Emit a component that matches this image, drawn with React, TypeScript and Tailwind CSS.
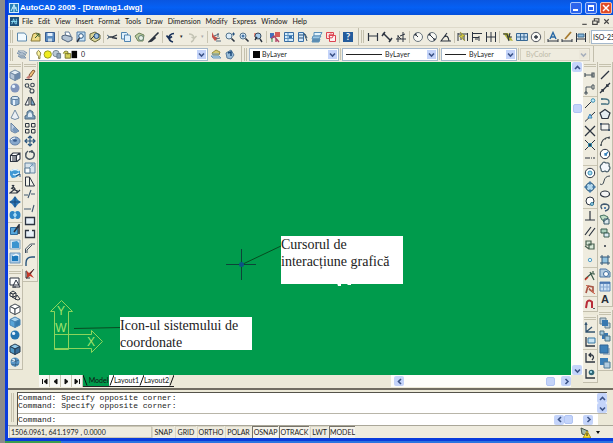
import React from "react";

const ink = "#2c3440";
const navy = "#24507c";
const pale = "#dcecf8";

const Ball = ({ fill }: { fill: string }) => (
  <>
    <circle cx="6" cy="6" r="4.5" fill={fill} />
    <circle cx="4.6" cy="4.4" r="1.6" fill="#e8f4ff" />
  </>
);

const Lens = () => (
  <>
    <circle cx="5" cy="5" r="3" fill={pale} stroke="#54748c" />
    <path d="M7.5 7.5l3 3" stroke={ink} strokeWidth="1.6" />
  </>
);

const Cube = ({ top, left, right, line }: { top: string; left: string; right: string; line: string }) => (
  <g stroke={line} strokeLinejoin="round">
    <path d="M1 3.5L6 1l5 2.5L6 6z" fill={top} />
    <path d="M1 3.5V9l5 2.5V6z" fill={left} />
    <path d="M11 3.5V9l-5 2.5V6z" fill={right} />
  </g>
);

const icons: Record<string, React.ReactNode> = {
  New: <path d="M1.5 2h7l2 2.5V10h-9z" fill="#f2faff" stroke="#5c88ac" />,
  Open: (
    <>
      <path d="M1 10L3 3l3-1 4 1v7z" fill="#f0dc88" stroke="#887838" />
      <path d="M5 7l4-4M6 3h3v3" stroke="#386038" />
    </>
  ),
  Save: (
    <>
      <path d="M1.500 1.500h9v9h-9z" fill="#5c8cc0" stroke="#385c90" />
      <path d="M3.500 2h5v3h-5z" fill="#e4f0fc" />
      <path d="M4 7.500h4v3H4z" fill="#c4d8e8" />
    </>
  ),
  Plot: (
    <>
      <path d="M4 1h4l2 4H5z" fill="#fff" stroke="#68809c" />
      <path d="M1 5l3-1 7 2v3l-4 2-6-3z" fill="#b4c4d4" stroke="#50647c" />
    </>
  ),
  Preview: (
    <>
      <path d="M2 1h8v9H2z" fill="#c8e4f8" stroke="#4c78a4" />
      <circle cx="6" cy="5" r="2.300" fill="#fff" stroke={navy} />
      <path d="M4.500 7L2 11" stroke={ink} strokeWidth="1.500" />
    </>
  ),
  Publish: (
    <>
      <path d="M1 3l5-2 5 3v4l-5 3-5-3z" fill="#d8d498" stroke="#68683c" />
      <circle cx="7.500" cy="5" r="2.500" fill="#9cc0e0" stroke={navy} />
      <path d="M2 8l3-3" stroke={ink} />
    </>
  ),
  Cut: (
    <>
      <path d="M2 6h4l5-2M6 6.500l5 1" stroke={ink} strokeWidth="1.300" />
      <path d="M1 4l3 2-3 2" stroke="#5c7488" />
    </>
  ),
  Copy: (
    <g fill="#e0f0fc" stroke="#5084b0">
      <path d="M1.500 1.500h5l1 1V8h-6z" />
      <path d="M4.500 4h5l1 1v5.500h-6z" />
    </g>
  ),
  Paste: (
    <>
      <path d="M1 5l4-3 5 2-1 6H4z" fill="#bccca4" stroke="#70845c" />
      <circle cx="7" cy="7" r="2.500" fill="#e8f0e8" stroke="#608070" />
    </>
  ),
  "Match Properties": <path d="M10.500 1.500L6 6M6 6l-4.500 4.500 2-.4L7 7z" stroke={ink} strokeWidth="1.600" fill="#5c4430" />,
  Undo: <path d="M8 11q-4-1-4-4.500Q4.500 3 9 2.500M1.500 4.500L4 7.500l3-2" stroke="#183058" strokeWidth="1.700" />,
  Redo: <path d="M5 11q3-1 3-4.500Q7 3 3 3M10.500 5L8 7.500 5.500 6" stroke="#c4c4b4" strokeWidth="1.400" />,
  Pan: (
    <>
      <path d="M2 1v5l3 4 3-3-4-2z" fill="#c45048" />
      <path d="M4 5l5-2M6 8l4-1M6 10h5M8 2v4" stroke="#54687c" />
    </>
  ),
  "Zoom Realtime": (
    <>
      <Lens />
      <path d="M8 3h3M9.500 1.500v3" stroke={navy} />
    </>
  ),
  "Zoom Window": (
    <>
      <Lens />
      <circle cx="5" cy="5" r="1.500" fill="#4878a8" />
    </>
  ),
  "Zoom Previous": (
    <>
      <path d="M2 2h6v4H2z" fill="#f08c78" />
      <circle cx="6" cy="5" r="3" fill="#a8ccec" stroke="#384c60" />
      <path d="M8 8l2 3M3 9l2-3" stroke={ink} strokeWidth="1.400" />
    </>
  ),
  Properties: (
    <>
      <path d="M1 2h4v5H1z" fill="#4470bc" />
      <path d="M6 1h5v5H6z" fill="#d45c58" />
      <path d="M2 8l3-3 5 6M7 7v4" stroke="#b04468" strokeWidth="1.400" />
      <path d="M3 7v4" stroke="#389058" />
    </>
  ),
  DesignCenter: (
    <>
      <path d="M1.500 1.500h9v9h-9z" fill="#d4ecfc" stroke="#386ca0" />
      <path d="M5 2v8M2 4.500h8M2 7.500h8" stroke="#5890c0" />
      <path d="M6 5h3v2H6z" fill="#3870a8" />
    </>
  ),
  "Tool Palettes": (
    <>
      <path d="M1.500 1.500h5v9h-5z" fill="#d0e8fc" stroke="#3870a8" />
      <path d="M7 2l3 8M8 3l2 4M2 4h4M2 7h4" stroke="#30506c" />
    </>
  ),
  "Sheet Set Manager": (
    <g stroke="#5c90b8">
      <path d="M3 1.500h8L9 5H3z" fill="#e4f4fc" />
      <path d="M2 5h8l-2 3H1z" fill="#9cc8e4" />
      <path d="M2 8h7l-1 3H1z" fill="#5c8cb0" />
    </g>
  ),
  "Markup Set Manager": (
    <g stroke="#dc4450">
      <path d="M1.500 1.500h7v6h-7z" fill="#fce0e0" />
      <path d="M4.500 4.500h6v6h-6z" fill="#fcf0f0" />
      <circle cx="6" cy="5" r="2" fill="none" />
    </g>
  ),
  Linear: <path d="M1.500 2v8M10.500 2v8M2 5h8" stroke={ink} strokeWidth="1.200" />,
  Aligned: <path d="M2 2l8 8M1 5l3-4M8 11l3-4" stroke={ink} strokeWidth="1.500" />,
  Ordinate: <path d="M1 8h10M3 4v7M8 1v10M5 5l5-2M3 5l3 3" stroke={ink} />,
  Radius: (
    <>
      <circle cx="6" cy="6" r="4.500" stroke="#68747c" fill="#f8f8f4" />
      <path d="M6 6L3 3M3 5V3h2" stroke={ink} />
    </>
  ),
  Diameter: (
    <>
      <circle cx="6" cy="6" r="4.500" stroke="#68747c" fill="#f8f8f4" />
      <path d="M3 3l6 6M3 5V3h2M9 7v2H7" stroke={ink} />
    </>
  ),
  Angular: <path d="M7 2L1 10h10M4 6q4-3 5 4" stroke={ink} strokeWidth="1.100" />,
  "Quick Dimension": (
    <>
      <path d="M1 2v8M10.500 2v8M1 3h9M4 4v5M7 4v5" stroke={ink} />
      <path d="M3 1l5 4-3 1 3 4-6-5 3-1z" fill="#d4cc48" stroke="#807c20" strokeWidth=".5" />
    </>
  ),
  Baseline: <path d="M1.500 1v10M2 2.500h9M2 6.500h6M8 5v5M4 8h3" stroke={ink} />,
  Continue: <path d="M1.500 1v10M6 1v10M10.500 1v10M2 6h8" stroke={ink} />,
  Leader: (
    <>
      <path d="M1 2l5 0 5 8-5-1z" fill="#b4b438" />
      <path d="M1 3h4l2 7M8 2l-1 4h3" stroke={ink} strokeWidth="1.100" />
    </>
  ),
  Tolerance: (
    <>
      <path d="M.500 2.500h11v7H.500z" fill="#c4dcf0" stroke="#386894" />
      <path d="M4.500 3v6M8 3v6M1 6h10" stroke="#386894" />
    </>
  ),
  "Center Mark": (
    <>
      <circle cx="6" cy="6" r="4.700" stroke="#50545c" fill="#f8f8f4" />
      <path d="M6 4v4M4 6h4" stroke={ink} strokeWidth="1.300" />
    </>
  ),
  "Dimension Text Edit": (
    <>
      <path d="M3 8l3-6.500L9 8M4 6h4" stroke="#2868a4" strokeWidth="1.400" />
      <path d="M1 8v3M11 8v3M1 10h10" stroke={ink} />
    </>
  ),
  "Dimension Edit": (
    <>
      <path d="M1 8v3M11 8v3M1 10h10" stroke={ink} />
      <path d="M10 1L4 8" stroke="#a87c30" strokeWidth="1.800" />
    </>
  ),
  "Dimension Update": (
    <>
      <path d="M1.500 2v9M10.500 2v9M2 8h8" stroke={ink} />
      <path d="M3 3h6v3H3z" fill="#88b8dc" stroke="#386890" />
    </>
  ),
  "Layer Properties": (
    <g stroke="#7c94ac">
      <path d="M2 3h6l3 2H5z" fill="#fff" />
      <path d="M1 5h6l3 2H4z" fill="#dce4ec" />
      <path d="M2 8h6l2 2H5z" fill="#b0c0d0" />
    </g>
  ),
  "Make Layer Current": (
    <>
      <path d="M2 5l4-3 4 2-1 3H3z" fill="#d4c870" stroke="#989040" />
      <path d="M1 8h8l2 2H3zM2 6h7" stroke="#6898bc" fill="#b8d8ec" />
    </>
  ),
  "Layer Previous": (
    <>
      <path d="M2 5l5-3 3 5-3 4-4-1z" fill="#98bcd8" stroke="#587c9c" />
      <path d="M4 5l3-1v4" stroke="#1c4878" strokeWidth="1.500" />
    </>
  ),
  Box: <Cube top="#e4ecf4" left="#b4c4d8" right="#6c88ac" line="#7088a4" />,
  Sphere: <Ball fill="#8094bc" />,
  Cylinder: (
    <>
      <path d="M2 3v6q4 3 8 0V3z" fill="#88a8c8" stroke="#587898" />
      <path d="M4 4h2v6H4z" fill="#e4f0fc" />
      <ellipse cx="6" cy="3" rx="4" ry="1.600" fill="#dcecf8" stroke="#587898" />
    </>
  ),
  Cone: <path d="M6 1l4 8q-4 3-8 0z" fill="#ecf0f4" stroke="#748ca4" />,
  Wedge: (
    <>
      <path d="M2 1l8 8-4 2-4-2z" fill="#c0d0e4" stroke="#6480a0" />
      <path d="M5 5l5 4-4 2-3-3z" fill="#7898bc" />
    </>
  ),
  Torus: (
    <>
      <ellipse cx="6" cy="6" rx="5" ry="4" fill="#88a8cc" stroke="#6080a8" />
      <ellipse cx="6" cy="5.500" rx="2" ry="1.200" fill="#385c8c" />
      <path d="M2 5q1-2 4-2" stroke="#fff" />
    </>
  ),
  Extrude: <path d="M1.500 4.500h6v6h-6zM1.500 4.500L4 2h7v6l-3 2.500M7.500 4.500L11 2M4 5v5M6 5v5" stroke={ink} strokeWidth="1.100" fill="#fff" />,
  Revolve: (
    <>
      <path d="M1 4q5-4 10 0v3q-3 4-8 4L1 8z" fill="#4098d4" />
      <path d="M2 4q4-3 8 0M4 7q2 2 6-1" stroke="#e0f4ff" strokeWidth="1.300" />
      <path d="M7 9l4-2v3" stroke={navy} />
    </>
  ),
  Slice: <path d="M3 2l3 4-5 4h7l3-3M2 5l6 3M5 2l-2 4M8 7v3" stroke={ink} strokeWidth="1.200" />,
  Section: (
    <>
      <path d="M6 0l3 4 3 2-3 2-3 4-3-4-3-2 3-2z" fill="#2c78b8" />
      <path d="M6 1v10M1 6h10" stroke="#184878" />
    </>
  ),
  Interfere: (
    <>
      <ellipse cx="3.500" cy="6" rx="3" ry="4" fill="#2c84c4" />
      <ellipse cx="8.500" cy="6" rx="3" ry="4" fill="#2c84c4" />
      <path d="M6 3l2 3-2 3-2-3z" fill="#a8dcf8" />
    </>
  ),
  "Setup Drawing": (
    <>
      <path d="M1.500 3.500h7v7h-7z" fill="#58a8dc" stroke="#306c9c" />
      <path d="M5 8l5-7v9" stroke={ink} strokeWidth="1.600" />
    </>
  ),
  "Setup View": (
    <>
      <path d="M1 2h10v9H1z" fill="#d8e8f4" stroke="#88a4bc" />
      <path d="M3 4l5-1 2 2v5H3z" fill="#3c94d0" />
    </>
  ),
  "Setup Profile": (
    <>
      <path d="M1 1h10v10H1z" fill="#a8cce8" stroke="#7098bc" />
      <path d="M3 4h6v5H3z" fill="#1c78bc" />
      <path d="M4 4l3-2 3 2" stroke="#fff" />
    </>
  ),
  "2D Wireframe": <path d="M1 2h9v7H1zM4 10l3-6 4 7H4M3 11h4" stroke={ink} fill="#fff" />,
  "3D Wireframe": <path d="M1 4l3-2 3 2v3L4 8 1 7zM1 4l3 1 3-1M4 5v3M6 10l2-4 3 4-2 1zM3 8l4 2" stroke={ink} fill="none" />,
  Hidden: <Cube top="#fff" left="#fff" right="#fff" line="#444c54" />,
  "Flat Shaded": <Cube top="#a8d4f0" left="#58a4d8" right="#387cb0" line="#4884b4" />,
  "Gouraud Shaded": <Ball fill="#2474b0" />,
  "Flat Shaded Edges": <Cube top="#90c8e8" left="#5098c4" right="#386c98" line="#243c54" />,
  "Gouraud Shaded Edges": (
    <>
      <Ball fill="#5c98c8" />
      <path d="M2 4q4 3 8 0M2 8q4 2 8 0M6 2q2 4 0 9" stroke="#305878" strokeWidth=".7" />
    </>
  ),
  Erase: (
    <>
      <path d="M5 6l4-5 2 1-4 6z" fill="#f0c078" stroke="#805838" />
      <path d="M5 6l2 2-2 2-3-1z" fill="#c88078" />
      <path d="M1 10.500h7" stroke={ink} />
    </>
  ),
  "Copy Object": (
    <g stroke="#3c4854" strokeWidth="1.100">
      <circle cx="3" cy="3.500" r="1.800" />
      <circle cx="8.500" cy="3" r="1.800" />
      <circle cx="8" cy="9" r="2" />
      <path d="M4.500 5.500L7 7" />
    </g>
  ),
  Mirror: (
    <>
      <path d="M5 2v8H1z" stroke={ink} fill="#f8f8f8" />
      <path d="M7 2v8h4z" stroke={ink} fill="#78a8cc" />
    </>
  ),
  Offset: (
    <>
      <path d="M1 10V7l2-1V3l3-2 3 2v3l2 1v3z" fill="#7c9cb8" stroke="#506c84" />
      <path d="M4 8V5l2-2 2 2v3z" fill="#e0ecf4" />
    </>
  ),
  Array: <path d="M1.500 1.500h3.500v3.500H1.500zM7.500 1.500H11v3.500H7.500zM1.500 7.500h3.500V11H1.500zM7.500 7.500H11V11H7.500z" stroke={ink} />,
  Move: <path d="M6 1v10M1 6h10M4 3l2-2 2 2M4 9l2 2 2-2M3 4L1 6l2 2M9 4l2 2-2 2" stroke="#28547c" strokeWidth="1.200" />,
  Rotate: <path d="M4 2Q1 4 2 8q3 4 7 1 3-4-1-7L5 3M8 1v3" stroke="#485460" strokeWidth="1.400" />,
  Scale: (
    <>
      <path d="M1 1h10v10H1z" fill="#d8e4ec" stroke="#6484a0" />
      <path d="M1 6h5v5H1z" fill="#f8fcff" stroke="#587890" />
      <path d="M5 6l4-4M6.500 2H9v2.500" stroke="#7098b8" />
    </>
  ),
  Stretch: <path d="M1.500 11V2h4l5 9zM5.500 2v9" fill="#f4f4ec" stroke={ink} />,
  Trim: <path d="M0 7h4M7 6h4M4 10l3-8" stroke="#405870" strokeWidth="1.100" />,
  Extend: <path d="M0 7h7M8 10l2-7" stroke="#405870" strokeWidth="1.100" />,
  "Break at Point": <path d="M1.500 2.500h9v7h-9z" fill="#e8f0f8" stroke={ink} strokeWidth="1.300" />,
  Break: <path d="M5 2.500H1.500v7h9v-7H8" fill="#e8f0f8" stroke={ink} strokeWidth="1.300" />,
  Chamfer: <path d="M1.500 11V7l5-5H11M3 11V8l5-5" stroke="#405060" />,
  Fillet: <path d="M2 11V8q0-6 6-6h3" stroke="#28547c" strokeWidth="1.400" />,
  Explode: (
    <>
      <path d="M2 2l3 3 5-4-3 5 3 4-4-2-4 3 1-4z" fill="#c43828" />
      <path d="M6 6l4-5M2 3v7h4" stroke={ink} />
    </>
  ),
  "Temporary Tracking": <path d="M1 4v4M1 6h8M8 4h2v4H8z" stroke="#48545c" strokeWidth="1.200" />,
  "Snap From": <path d="M2 10V4h6M8 2h2v4H8zM1 9h2v2H1z" stroke="#48545c" />,
  Endpoint: (
    <>
      <path d="M1 10l8-8" stroke={ink} />
      <circle cx="9" cy="2.500" r="1.800" stroke="#3c94b8" fill="#c8e8f4" />
    </>
  ),
  Midpoint: (
    <>
      <path d="M1 10.500L11 1" stroke={ink} />
      <path d="M6 3l2 4H4z" stroke="#3884bc" fill="#a8d0ec" />
    </>
  ),
  Intersection: <path d="M1 1l10 10M11 1L1 11" stroke={ink} strokeWidth="1.300" />,
  "Apparent Intersection": (
    <>
      <path d="M1 1l10 10M11 1L1 11" stroke={ink} />
      <path d="M4.500 4.500h3v3h-3z" stroke="#3890b4" />
    </>
  ),
  Extension: <path d="M1 6h5M7 6h1M9 6h2" stroke={ink} />,
  "Snap Center": (
    <>
      <circle cx="6" cy="6" r="4.700" stroke={ink} fill="#fff" />
      <circle cx="6" cy="6" r="2" fill="#a8dcf0" stroke="#3c90b8" />
    </>
  ),
  Quadrant: (
    <>
      <circle cx="6" cy="6" r="4" stroke="#38607c" fill="#b4d8ec" />
      <path d="M6 0l2 2-2 2-2-2zM6 8l2 2-2 2-2-2zM0 6l2-2 2 2-2 2zM8 6l2-2 2 2-2 2z" fill="#487ca8" />
    </>
  ),
  Tangent: (
    <>
      <circle cx="6" cy="6" r="4" stroke={ink} fill="#fff" />
      <circle cx="8" cy="9" r="1.500" fill="#a4d4e8" stroke="#307c9c" />
    </>
  ),
  Perpendicular: <path d="M6 1v9M1 10h10" stroke={ink} strokeWidth="1.200" />,
  Parallel: <path d="M1 10l6-8M5 11l6-8" stroke={ink} strokeWidth="1.200" />,
  "Snap Insert": <path d="M2 2h5v4H2zM5 5h5v5H5zM1 7l4 3" stroke="#486050" strokeWidth="1.200" fill="#d8e8d8" />,
  Node: <circle cx="6" cy="6" r="1.700" stroke="#54a0c8" fill="#e4f4fc" />,
  Nearest: (
    <>
      <path d="M1 10l7-6M6 3l4 8M9 2v3h2" stroke="#385848" strokeWidth="1.200" />
      <path d="M1 11l3-3" stroke="#c43828" strokeWidth="1.500" />
    </>
  ),
  "Snap None": (
    <>
      <path d="M2 10l2-7 5 1v5L5 6" stroke="#a85848" strokeWidth="1.700" />
      <path d="M2 2l9 9" stroke="#d46850" />
    </>
  ),
  "Osnap Settings": (
    <>
      <path d="M2 10l1-6q2-3 5 0v6" stroke="#b82c38" strokeWidth="2" />
      <path d="M10 10v1" stroke={ink} strokeWidth="1.500" />
    </>
  ),
  UCS: <path d="M2 1v9h9M2 10l6-5M1 3l1-2 1 2" stroke="#345470" strokeWidth="1.300" />,
  "UCS Dialog": (
    <>
      <path d="M2 1v9h9" stroke={ink} strokeWidth="1.300" />
      <path d="M4 2h7v5H4z" stroke="#3878a4" fill="#c8e4f4" />
    </>
  ),
  "UCS Previous": <path d="M2 1v9h9M8 8q3-3 0-5H5M7 1L5 3l2 2" stroke={ink} strokeWidth="1.300" />,
  "UCS World": (
    <>
      <path d="M2 1v9h9" stroke={ink} strokeWidth="1.300" />
      <circle cx="7.500" cy="4.500" r="2.800" fill="#306878" />
      <path d="M6 3h2v2H6z" fill="#98d0e0" />
    </>
  ),
  Line: <path d="M2 10l8-8" stroke={ink} strokeWidth="1.200" />,
  "Construction Line": <path d="M1 11L11 1M3 7v2h2M7 3h2v2" stroke={ink} strokeWidth="1.300" />,
  Polyline: <path d="M2 4h4q4 0 4 3T7 9H2M3 3v2" stroke="#447080" strokeWidth="1.300" />,
  Polygon: <path d="M6 1.500L11 5l-2 5.500H3L1 5z" stroke={ink} fill="#e4ecf0" strokeWidth="1.200" />,
  Rectangle: (
    <>
      <path d="M2 3h8v6H2z" stroke={ink} fill="#f4f4f0" />
      <path d="M1 2h2v2H1zM9 8h2v2H9z" fill="#44586c" />
    </>
  ),
  Arc: <path d="M2 11q0-8 9-9M1 10h2M5 4h2M10 2v2" stroke="#40484c" strokeWidth="1.200" />,
  Circle: (
    <>
      <circle cx="6" cy="6" r="4.700" stroke={ink} fill="#fff" />
      <path d="M6 7l3-3M6 5v2h2" stroke="#3480bc" strokeWidth="1.300" />
    </>
  ),
  "Revision Cloud": <path d="M3 3q1-3 4-1 4-1 3 3 2 2 0 4-1 3-4 1-4 2-4-2-2-3 1-5z" stroke="#4c606c" fill="#f4f8fc" strokeWidth="1.200" />,
  Spline: <path d="M1 10q3 2 4-3t6-5" stroke="#404c54" />,
  Ellipse: <ellipse cx="6" cy="6" rx="4.500" ry="3" stroke={ink} strokeWidth="1.200" fill="#f4f4f4" />,
  "Ellipse Arc": (
    <>
      <path d="M3 8Q0 4 5 3q5 0 5 3t-4 4" stroke="#405870" strokeWidth="1.300" />
      <path d="M5 6h2v2H5z" fill="#5484b4" />
    </>
  ),
  "Insert Block": (
    <>
      <path d="M1 2l4-1 4 2-1 4-5-1z" fill="#c0dcc4" stroke="#447060" />
      <path d="M5 5h5v5H5zM4 8l5-4" stroke="#385868" fill="#dce8ec" />
    </>
  ),
  "Make Block": (
    <>
      <path d="M2 2h6v4H2z" fill="#acd0bc" stroke="#385c50" />
      <path d="M5 6h5v4H5z" fill="#dcecf4" stroke="#385c50" />
    </>
  ),
  Point: <circle cx="6" cy="6" r="1" fill={ink} />,
  Hatch: (
    <>
      <path d="M3 3h6v6H3z" fill="#94c4e0" />
      <path d="M3 1v10M9 1v10M1 3h10M1 9h10" stroke="#345878" />
    </>
  ),
  Region: (
    <>
      <path d="M1 2h6l4 3v5H1z" fill="#b4cce0" stroke="#5078a4" />
      <circle cx="7" cy="7" r="2.500" fill="#fff" stroke="#3c6c9c" />
    </>
  ),
  Table: (
    <>
      <path d="M1 2h10v9H1z" fill="#cce0f4" stroke="#5c88bc" />
      <path d="M1 3h10" stroke="#3464a4" strokeWidth="1.500" />
      <path d="M4.500 4v7M8 4v7M1 7h10" stroke="#84a8d0" />
    </>
  ),
  "Bring to Front": (
    <>
      <path d="M1 1h6v6H1zM6 6h5v5H6z" fill="#b8ccd8" stroke="#68808c" />
      <path d="M3 3h6v6H3z" fill="#3878b0" />
    </>
  ),
  "Send to Back": (
    <>
      <path d="M3 3h6v6H3z" fill="#3878b0" />
      <path d="M1 1h4v4H1zM6 6h5v5H6z" fill="#a4c8dc" stroke="#507488" />
    </>
  ),
  "Bring Above": (
    <>
      <path d="M4 4h7v7H4z" fill="#a8b8c4" />
      <path d="M1 1h8v8H1z" fill="#3c80b8" stroke="#306494" />
    </>
  ),
  "Send Under": (
    <>
      <path d="M1 1h8v7H1z" fill="#3c80b8" />
      <path d="M5 5h6v6H5z" fill="#b0cce0" stroke="#4c7898" />
    </>
  ),
};

const Icon = ({ name }: { name: string }) => (
  <svg viewBox="0 0 12 12" className="size-3" fill="none" aria-hidden="true">
    {icons[name]}
  </svg>
);

const Tool = ({ name }: { name: string }) => {
  let face = <Icon name={name} />;
  if (name === "Multiline Text") {
    face = <span className="font-['Liberation_Sans'] text-[11px] leading-3 font-bold text-[#283038]">A</span>;
  }
  if (name === "Help") {
    face = <span className="size-[10px] bg-[#245c9c] text-center text-[9px] leading-[10px] font-bold text-white">?</span>;
  }
  return (
    <button type="button" aria-label={name} title={name} className="flex h-[13px] w-[14px] shrink-0 items-center justify-center">
      {face}
    </button>
  );
};

const Bar = () => <span className="mx-px h-3 w-px shrink-0 bg-[#c9c5b2]" />;

const Grip = () => (
  <span className="mx-[2px] flex h-[13px] w-[3px] shrink-0 justify-between border-x border-[#c5c1ad]" />
);

const ToolRow = ({ groups }: { groups: string[][] }) => (
  <div className="flex items-center">
    {groups.map((group, i) => (
      <React.Fragment key={group[0]}>
        {i > 0 && <Bar />}
        {group.map((name) => (
          <Tool key={name} name={name} />
        ))}
      </React.Fragment>
    ))}
  </div>
);

interface PaletteProps {
  groups: { height: string; names: string[] }[];
}

const Palette = ({ groups }: PaletteProps) => (
  <div className="flex flex-col items-center border-r border-b border-[#c2beac] bg-[#efecdf]">
    <span className="mt-[2px] mb-px h-[3px] w-3 shrink-0 border-y border-[#c5c1ad]" />
    {groups.map((group, i) => (
      <div key={group.names[0]} className={`w-full ${i > 0 ? "border-t border-[#c9c5b2]" : ""}`}>
        <div className={`grid auto-rows-fr place-items-center ${group.height}`}>
          {group.names.map((name) => (
            <Tool key={name} name={name} />
          ))}
        </div>
      </div>
    ))}
  </div>
);

const Dock = ({ children }: { children: React.ReactNode }) => <div className="flex flex-col gap-[3px]">{children}</div>;

const arrows = {
  up: "M2 6l2.500-2.500L7 6",
  down: "M2 3.500L4.500 6 7 3.500",
  left: "M6 2L3.500 4.500 6 7",
  right: "M3.500 2L6 4.500 3.500 7",
};

const Chevron = ({ dir }: { dir: keyof typeof arrows }) => (
  <svg viewBox="0 0 9 9" className="size-[9px]" fill="none" stroke="#3c5488" strokeWidth="1.600" aria-hidden="true">
    <path d={arrows[dir]} />
  </svg>
);

const ScrollButton = ({ dir }: { dir: keyof typeof arrows }) => (
  <button
    type="button"
    aria-label={`Scroll ${dir}`}
    className="flex size-[10px] shrink-0 items-center justify-center rounded-[2px] bg-[#c4d4fa]"
  >
    <Chevron dir={dir} />
  </button>
);

const Thumb = () => <span className="size-[9px] shrink-0 rounded-[2px] border border-[#b0c4f4] bg-[#c4d4fa]" />;

interface ComboProps {
  label: string;
  value: string;
  width: string;
  disabled?: boolean;
  children?: React.ReactNode;
}

const Combo = ({ label, value, width, disabled = false, children }: ComboProps) => (
  <div
    className={`relative flex h-[13px] shrink-0 items-center border pl-[3px] ${width} ${
      disabled ? "border-[#d4d0c0] bg-[#efecdf] text-[#bdb9a8]" : "border-[#a4b8cc] bg-white text-[#222]"
    }`}
  >
    {children}
    <select aria-label={label} disabled={disabled} className="h-full min-w-0 flex-1 appearance-none pl-[2px] text-[7px] leading-[11px]">
      <option>{value}</option>
    </select>
    <span
      className={`pointer-events-none absolute top-px right-px flex h-[9px] w-[9px] items-center justify-center ${
        disabled ? "bg-[#e6e2d4] opacity-40" : "bg-[#c4d4fa]"
      }`}
    >
      <Chevron dir="down" />
    </span>
  </div>
);

const LayerState = () => (
  <svg viewBox="0 0 46 12" className="h-[11px] w-[46px] shrink-0" fill="none" aria-hidden="true">
    <path d="M4 8Q0 4 4 1.500 8 4 5.500 8v2.500H4z" fill="#fcf4a0" stroke="#807840" />
    <circle cx="14" cy="6" r="4" fill="#f0ec20" stroke="#949820" />
    <circle cx="23" cy="5" r="3.500" fill="#b8c8d4" stroke="#74848c" />
    <path d="M24 5h4v5h-4z" fill="#8ca4b8" stroke="#687c8c" />
    <path d="M31 5q1-4 5-2v3M33 5h6v5h-6z" fill="#d4d058" stroke="#74742c" />
    <path d="M40 2h6v8h-6z" fill="#080808" />
  </svg>
);

const menus = ["File", "Edit", "View", "Insert", "Format", "Tools", "Draw", "Dimension", "Modify", "Express", "Window", "Help"];

const TitleBar = () => (
  <header className="flex h-[15px] items-center bg-gradient-to-b from-[#0a56e0] via-[#0560f4] to-[#0450dc] pr-px pl-px text-white">
    <svg viewBox="0 0 10 10" className="size-[10px]" aria-hidden="true">
      <path d="M0 0h10v10H0z" fill="#d8ecfc" />
      <path d="M1 1h8v8H1z" fill="#2880b8" />
      <path d="M2 8l3-6 3 6M3 5h5M5 1v8" stroke="#c4ecfc" fill="none" />
    </svg>
    <h1 className="ml-px font-['Liberation_Sans'] text-[8px] leading-[15px] font-bold whitespace-nowrap">
      AutoCAD 2005 - [Drawing1.dwg]
    </h1>
    <div className="ml-auto flex gap-[3px]">
      <button type="button" aria-label="Minimize" className="flex size-3 items-end rounded-[2px] border border-[#a8c4fc] bg-[#2c64ec] p-[2px]">
        <span className="h-[2px] w-[5px] bg-white" />
      </button>
      <button type="button" aria-label="Maximize" className="size-3 rounded-[2px] border border-[#a8c4fc] bg-[#2c64ec] p-[2px]">
        <span className="block h-[6px] border border-t-2 border-white" />
      </button>
      <button type="button" aria-label="Close" className="flex size-3 items-center justify-center rounded-[2px] border border-[#f4c0b0] bg-[#e04c28]">
        <svg viewBox="0 0 8 8" className="size-2" stroke="#fff" strokeWidth="1.500" aria-hidden="true">
          <path d="M1 1l6 6M7 1L1 7" />
        </svg>
      </button>
    </div>
  </header>
);

const MenuBar = () => (
  <nav className="flex h-[13px] items-center border-b border-[#dedaca] pl-[2px]">
    <svg viewBox="0 0 10 10" className="mr-[3px] size-[9px]" fill="none" aria-hidden="true">
      <path d="M0 0h10v10H0z" fill="#1c507c" />
      <path d="M2 8l2-6 2 6M1 5h7M7 2v6" stroke="#8cdcf4" />
    </svg>
    {menus.map((menu) => (
      <button key={menu} type="button" className="mr-[5px] text-[7px] leading-3 text-[#141414]">
        {menu}
      </button>
    ))}
    <div className="ml-auto flex gap-[2px] pr-[2px]">
      {[
        ["Minimize drawing", "M2 6.500h4"],
        ["Restore drawing", "M3 3V1.500h4v3H5.500M1.500 3.500h4v3h-4z"],
        ["Close drawing", "M2 2l4 4M6 2L2 6"],
      ].map(([label, d]) => (
        <button key={label} type="button" aria-label={label}>
          <svg viewBox="0 0 8 8" className="size-[9px]" fill="none" stroke="#444" aria-hidden="true">
            <path d={d} />
          </svg>
        </button>
      ))}
    </div>
  </nav>
);

const StandardBar = () => (
  <div className="flex h-[18px] items-center overflow-hidden border-b border-[#cfcbba]">
    <Grip />
    <ToolRow
      groups={[
        ["New", "Open", "Save"],
        ["Plot", "Preview", "Publish"],
        ["Cut", "Copy", "Paste", "Match Properties"],
        ["Undo"],
      ]}
    />
    <span className="w-[7px] shrink-0 text-center text-[5px] text-[#222]">▾</span>
    <Tool name="Redo" />
    <span className="w-[7px] shrink-0 text-center text-[5px] text-[#aaa]">▾</span>
    <Bar />
    <ToolRow
      groups={[
        ["Pan", "Zoom Realtime", "Zoom Window", "Zoom Previous"],
        ["Properties", "DesignCenter", "Tool Palettes", "Sheet Set Manager", "Markup Set Manager"],
        ["Help"],
      ]}
    />
    <span className="ml-[3px] h-full w-px shrink-0 bg-[#c2beac]" />
    <Grip />
    <ToolRow
      groups={[
        ["Linear", "Aligned", "Ordinate"],
        ["Radius", "Diameter", "Angular"],
        ["Quick Dimension", "Baseline", "Continue"],
        ["Leader", "Tolerance", "Center Mark"],
        ["Dimension Text Edit", "Dimension Edit", "Dimension Update"],
      ]}
    />
    <Bar />
    <select
      aria-label="Dimension style"
      className="h-[14px] min-w-0 flex-1 appearance-none border border-r-0 border-[#a4b8cc] bg-white pl-px text-[7px] leading-3 text-[#222]"
    >
      <option>ISO-25</option>
    </select>
  </div>
);

const PropertiesBar = () => (
  <div className="flex h-4 items-center overflow-hidden">
    <Grip />
    <Tool name="Layer Properties" />
    <Combo label="Layer" value="0" width="w-[179px]">
      <LayerState />
    </Combo>
    <span className="w-px shrink-0" />
    <Tool name="Make Layer Current" />
    <Tool name="Layer Previous" />
    <span className="ml-1 h-full w-px shrink-0 bg-[#c2beac]" />
    <Grip />
    <Combo label="Color" value="ByLayer" width="w-[90px]">
      <span className="size-[7px] shrink-0 bg-[#080808]" />
    </Combo>
    <Bar />
    <Combo label="Linetype" value="ByLayer" width="w-[96px]">
      <span className="mr-px h-px w-9 shrink-0 bg-[#222]" />
    </Combo>
    <Bar />
    <Combo label="Lineweight" value="ByLayer" width="w-[76px]">
      <span className="mr-px h-px w-[21px] shrink-0 bg-[#222]" />
    </Combo>
    <Bar />
    <Combo label="Plot style" value="ByColor" width="w-[70px]" disabled />
    <span className="ml-[3px] h-full w-px shrink-0 bg-[#c2beac]" />
  </div>
);

const Canvas = () => (
  <section aria-label="Drawing area" className="relative min-h-0 flex-1 overflow-hidden bg-[#009b4c]">
    <svg viewBox="0 0 176 56" className="absolute top-[173px] left-[187px] h-[56px] w-[176px]" fill="none" aria-hidden="true">
      <path d="M17 29l38-18" stroke="#074c20" />
      <path d="M0 29.500h30M15.500 14v31" stroke="#0c4438" />
      <circle cx="15.500" cy="29.500" r="2.500" fill="#0c5484" />
      <path d="M111 48h4v3h-3zM120 48h5v2h-3z" fill="#fff" />
    </svg>
    <p className="absolute top-[174px] left-[242px] h-12 w-[122px] bg-white font-['Liberation_Serif',serif] text-[14px] leading-[17px] whitespace-nowrap text-[#222]">
      Cursorul de
      <br />
      interacțiune grafică
    </p>
    <svg
      viewBox="0 0 72 56"
      className="absolute top-[237px] left-[10px] h-14 w-[72px] font-['Liberation_Sans']"
      fill="none"
      stroke="#8cd45c"
      aria-hidden="true"
    >
      <path d="M5.500 50.500v-38H1.500L12.500 1.500l11 11h-4v38zM5.500 35.500h37v-4l11 11-11 11v-4h-37" />
      <path d="M25 29.500l47-1" stroke="#0a4a22" />
      <g stroke="none" fill="#a4e46c" fontSize="12" textAnchor="middle">
        <text x="12" y="16">Y</text>
        <text x="12" y="33">W</text>
        <text x="42" y="47">X</text>
      </g>
    </svg>
    <p className="absolute top-[255px] left-[81px] h-[33px] w-[132px] bg-white font-['Liberation_Serif',serif] text-[14px] leading-[17px] whitespace-nowrap text-[#222]">
      Icon-ul sistemului de
      <br />
      coordonate
    </p>
  </section>
);

const Slash = ({ flip = false }: { flip?: boolean }) => (
  <svg viewBox="0 0 5 11" className="h-[11px] w-[5px] shrink-0" fill="none" stroke="#111" aria-hidden="true">
    <path d={flip ? "M0 0l4 10.500" : "M5 0L1 10.500"} />
  </svg>
);

const LayoutTabs = () => (
  <div className="flex h-3 items-center text-[7px] text-[#111]">
    <div className="flex h-full bg-[#f8f8f4]">
      {[
        ["First tab", "M2.500 2v5M7 2L4 4.500 7 7z"],
        ["Previous tab", "M6 2L3 4.500 6 7z"],
        ["Next tab", "M3 2l3 2.500L3 7z"],
        ["Last tab", "M6.500 2v5M2 2l3 2.500L2 7z"],
      ].map(([label, d]) => (
        <button key={label} type="button" aria-label={label} className="flex w-[11px] items-center justify-center border-r border-[#c8c4b4]">
          <svg viewBox="0 0 9 9" className="size-[9px]" fill="#111" stroke="#111" aria-hidden="true">
            <path d={d} />
          </svg>
        </button>
      ))}
    </div>
    <div className="flex h-full items-start border-b border-[#222]">
      <div className="flex h-[11px] bg-[#009b4c]">
        <Slash flip />
        <button type="button" className="w-[21px] leading-[11px]">Model</button>
      </div>
      {["Layout1", "Layout2"].map((tab) => (
        <div key={tab} className="flex h-[11px] bg-white">
          <Slash />
          <button type="button" className="w-[25px] leading-[11px]">{tab}</button>
        </div>
      ))}
      <Slash />
    </div>
    <div className="ml-auto flex h-full w-[180px] items-center bg-[#fdfdfa] pl-[3px]">
      <ScrollButton dir="left" />
      <span className="ml-auto" />
      <Thumb />
      <span className="w-[6px]" />
      <ScrollButton dir="right" />
    </div>
  </div>
);

const CommandWindow = () => (
  <section aria-label="Command window" className="flex h-[37px] border-t-2 border-[#716d62] bg-[#ece9d8] pt-[2px]">
    <span className="mx-[3px] mt-px mb-[3px] w-[3px] border-x border-[#c5c1ad]" />
    <div className="mr-[6px] flex min-w-0 flex-1 flex-col border-t border-l border-[#55534b] bg-white font-['Liberation_Mono',monospace] text-[8px] text-[#222]">
      <div className="flex h-[21px] justify-between border-b border-[#b8b5a8]">
        <div className="pt-px leading-2">
          <p>Command: Specify opposite corner:</p>
          <p>Command: Specify opposite corner:</p>
        </div>
        <div className="flex flex-col justify-between">
          <ScrollButton dir="up" />
          <ScrollButton dir="down" />
        </div>
      </div>
      <div className="flex h-[11px] items-center">
        <label htmlFor="command">Command:</label>
        <input id="command" className="h-[10px] min-w-0 flex-1 outline-none" />
        <ScrollButton dir="left" />
        <Thumb />
        <span className="w-[10px]" />
        <ScrollButton dir="right" />
        <span className="ml-[5px] h-full w-[9px] bg-[#ece9d8]" />
      </div>
    </div>
  </section>
);

const modes = [
  { name: "SNAP", on: false, width: "w-[22px]" },
  { name: "GRID", on: false, width: "w-[21px]" },
  { name: "ORTHO", on: false, width: "w-[27px]" },
  { name: "POLAR", on: false, width: "w-[26px]" },
  { name: "OSNAP", on: true, width: "w-[26px]" },
  { name: "OTRACK", on: true, width: "w-[30px]" },
  { name: "LWT", on: false, width: "w-[18px]" },
  { name: "MODEL", on: true, width: "w-[26px]" },
];

const StatusBar = () => (
  <footer className="flex h-[13px] items-center border-t border-[#aaa799] pl-px text-[7px] text-[#222]">
    <output className="h-3 w-[143px] border border-[#cbc7b6] pl-px leading-[11px] whitespace-pre">
      1506.0961, 641.1979 , 0.0000
    </output>
    <div className="flex gap-px">
      {modes.map((mode) => (
        <button
          key={mode.name}
          type="button"
          aria-pressed={mode.on}
          className={`h-3 border-t border-l text-center leading-[11px] ${mode.width} ${
            mode.on ? "border-[#77746a] bg-[#f6f4ec]" : "border-[#d8d5c6]"
          }`}
        >
          {mode.name}
        </button>
      ))}
    </div>
    <div className="mr-[13px] ml-auto flex h-full items-center gap-[5px]">
      <svg viewBox="0 0 11 11" className="size-[11px]" fill="none" aria-hidden="true">
        <path d="M1 1l7 3-2 4-4-1z" fill="#a8bcac" stroke="#44544c" />
        <path d="M7 4l4 7H3z" fill="#f8dc30" stroke="#a89020" />
        <path d="M7 6v3" stroke="#222" />
      </svg>
      <button type="button" aria-label="Status bar menu" className="border-x-2 border-t-[3px] border-x-transparent border-t-[#111]" />
    </div>
  </footer>
);

export default function App() {
  return (
    <div className="flex h-screen flex-col overflow-hidden bg-[#8b8b8b] font-['Lato',sans-serif]">
      <div className="ml-[5px] flex min-h-0 flex-1 flex-col border-b-[3px] border-l-[3px] border-[#0a3cdc] bg-[#efecdf]">
        <TitleBar />
        <MenuBar />
        <StandardBar />
        <PropertiesBar />
        <main className="flex min-h-0 flex-1 overflow-hidden bg-[#ece9d8]">
          <div className="flex w-[31px] shrink-0 items-start">
            <Dock>
              <Palette
                groups={[
                  { height: "h-[80px]", names: ["Box", "Sphere", "Cylinder", "Cone", "Wedge", "Torus"] },
                  { height: "h-[32px]", names: ["Extrude", "Revolve"] },
                  { height: "h-[40px]", names: ["Slice", "Section", "Interfere"] },
                  { height: "h-[42px]", names: ["Setup Drawing", "Setup View", "Setup Profile"] },
                ]}
              />
              <Palette
                groups={[
                  {
                    height: "h-[94px]",
                    names: ["2D Wireframe", "3D Wireframe", "Hidden", "Flat Shaded", "Gouraud Shaded", "Flat Shaded Edges", "Gouraud Shaded Edges"],
                  },
                ]}
              />
            </Dock>
            <Palette
              groups={[
                {
                  height: "h-[213px]",
                  names: [
                    "Erase", "Copy Object", "Mirror", "Offset", "Array", "Move", "Rotate", "Scale",
                    "Stretch", "Trim", "Extend", "Break at Point", "Break", "Chamfer", "Fillet", "Explode",
                  ],
                },
              ]}
            />
          </div>
          <div className="flex min-w-0 flex-1 flex-col">
            <div className="flex min-h-0 flex-1">
              <Canvas />
              <div className="flex w-[12px] flex-col items-center bg-[#fdfdfa]">
                <ScrollButton dir="up" />
                <span className="h-8" />
                <Thumb />
                <span className="mt-auto" />
                <ScrollButton dir="down" />
              </div>
            </div>
            <div className="pr-3 pb-px">
              <LayoutTabs />
            </div>
          </div>
          <div className="flex shrink-0 items-start overflow-hidden">
            <Dock>
              <Palette
                groups={[
                  { height: "h-[28px]", names: ["Temporary Tracking", "Snap From"] },
                  { height: "h-[68px]", names: ["Endpoint", "Midpoint", "Intersection", "Apparent Intersection", "Extension"] },
                  { height: "h-[42px]", names: ["Snap Center", "Quadrant", "Tangent"] },
                  { height: "h-[58px]", names: ["Perpendicular", "Parallel", "Snap Insert", "Node"] },
                  { height: "h-[28px]", names: ["Nearest", "Snap None"] },
                  { height: "h-[14px]", names: ["Osnap Settings"] },
                ]}
              />
              <Palette
                groups={[
                  { height: "h-[28px]", names: ["UCS", "UCS Dialog"] },
                  { height: "h-[32px]", names: ["UCS Previous", "UCS World"] },
                ]}
              />
            </Dock>
            <Dock>
              <Palette
                groups={[
                  {
                    height: "h-[238px]",
                    names: [
                      "Line", "Construction Line", "Polyline", "Polygon", "Rectangle", "Arc", "Circle", "Revision Cloud", "Spline",
                      "Ellipse", "Ellipse Arc", "Insert Block", "Make Block", "Point", "Hatch", "Region", "Table", "Multiline Text",
                    ],
                  },
                ]}
              />
              <Palette groups={[{ height: "h-[54px]", names: ["Bring to Front", "Send to Back", "Bring Above", "Send Under"] }]} />
            </Dock>
          </div>
        </main>
        <CommandWindow />
        <StatusBar />
      </div>
      <div className="ml-[5px] flex h-[2px] bg-[#2c74e0]">
        <span className="w-14 bg-[#3c9c50]" />
      </div>
    </div>
  );
}
